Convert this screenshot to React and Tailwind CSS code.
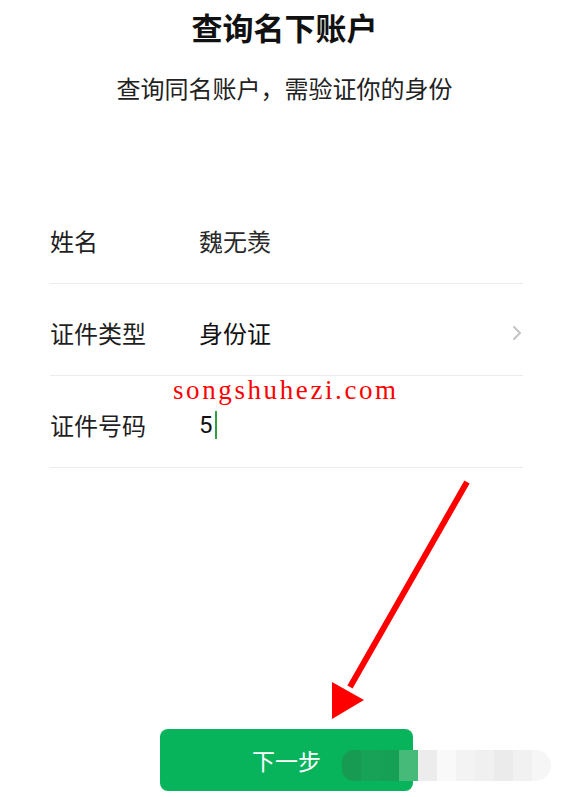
import React from 'react';

const rows = [
  { label: '姓名', value: '魏无羡', valueClass: 'text-[#2a2a2a]' },
  { label: '证件类型', value: '身份证', valueClass: 'text-[#111]', chevron: true },
  { label: '证件号码', value: '5', valueClass: 'text-[#111] font-["Roboto",sans-serif]', cursor: true },
];

// pixelated blur patch sitting over the button's right side
const mosaic = [
  'bg-[#179b52]', 'bg-[#18a257]', 'bg-[#16a056]', 'bg-[#46bb79]',
  'bg-[#ececec]', 'bg-[#f9f9f9]', 'bg-[#f3f3f3]', 'bg-[#f0f0f0]',
  'bg-[#ebebeb]', 'bg-[#f1f1f1]', 'bg-[#f6f6f6]',
];

export default function App() {
  return (
    <div className="relative w-[569px] h-[797px] overflow-hidden bg-white font-['Noto_Sans_CJK_SC','Noto_Sans',sans-serif]">
      {/* Header */}
      <h1 className="pt-[6px] text-center text-[31px] leading-[42px] font-bold text-[#111]">
        查询名下账户
      </h1>
      <p className="mt-[23px] text-center text-[24px] leading-[34px] text-[#222]">
        查询同名账户，需验证你的身份
      </p>

      {/* Form */}
      <div className="mt-[87px] ml-[50px] w-[473px]">
        {rows.map((r) => (
          <div
            key={r.label}
            className="flex items-center h-[92px] pt-[7px] border-b border-[#ececec]"
          >
            <span className="w-[149px] text-[24px] text-[#1f1f1f]">{r.label}</span>
            <span className={`flex items-center text-[24px] ${r.valueClass}`}>
              {r.value}
              {r.cursor && <span className="ml-[2px] inline-block w-[2px] h-[28px] bg-[#2ea043]" />}
            </span>
            {r.chevron && (
              <svg className="ml-auto mr-[1px]" width="10" height="16" viewBox="0 0 10 16" fill="none">
                <path d="M2 2l6 6-6 6" stroke="#c4c4c4" strokeWidth="2" strokeLinecap="round" strokeLinejoin="round" />
              </svg>
            )}
          </div>
        ))}
      </div>

      {/* Button */}
      <button className="mt-[261px] ml-[160px] w-[253px] h-[62px] rounded-[8px] bg-[#07b45b] text-white text-[23px] flex items-center justify-center">
        下一步
      </button>

      {/* Watermark */}
      <div className="absolute left-[173px] top-[373px] text-[27px] leading-[34px] tracking-[2.6px] text-[#ff0000] font-['Liberation_Serif',serif]">
        songshuhezi.com
      </div>

      {/* Mosaic */}
      <div className="absolute left-[342px] top-[750px] flex h-[31px] rounded-l-[12px] rounded-r-[16px] overflow-hidden">
        {mosaic.map((c, i) => (
          <div key={i} className={`w-[19px] h-full ${c}`} />
        ))}
      </div>

      {/* Annotation arrow */}
      <svg className="absolute left-0 top-0" width="569" height="797" viewBox="0 0 569 797">
        <line x1="467" y1="482" x2="350" y2="687" stroke="#ff0000" strokeWidth="6" />
        <polygon points="332,682 364,700 332,719" fill="#ff0000" />
      </svg>
    </div>
  );
}
